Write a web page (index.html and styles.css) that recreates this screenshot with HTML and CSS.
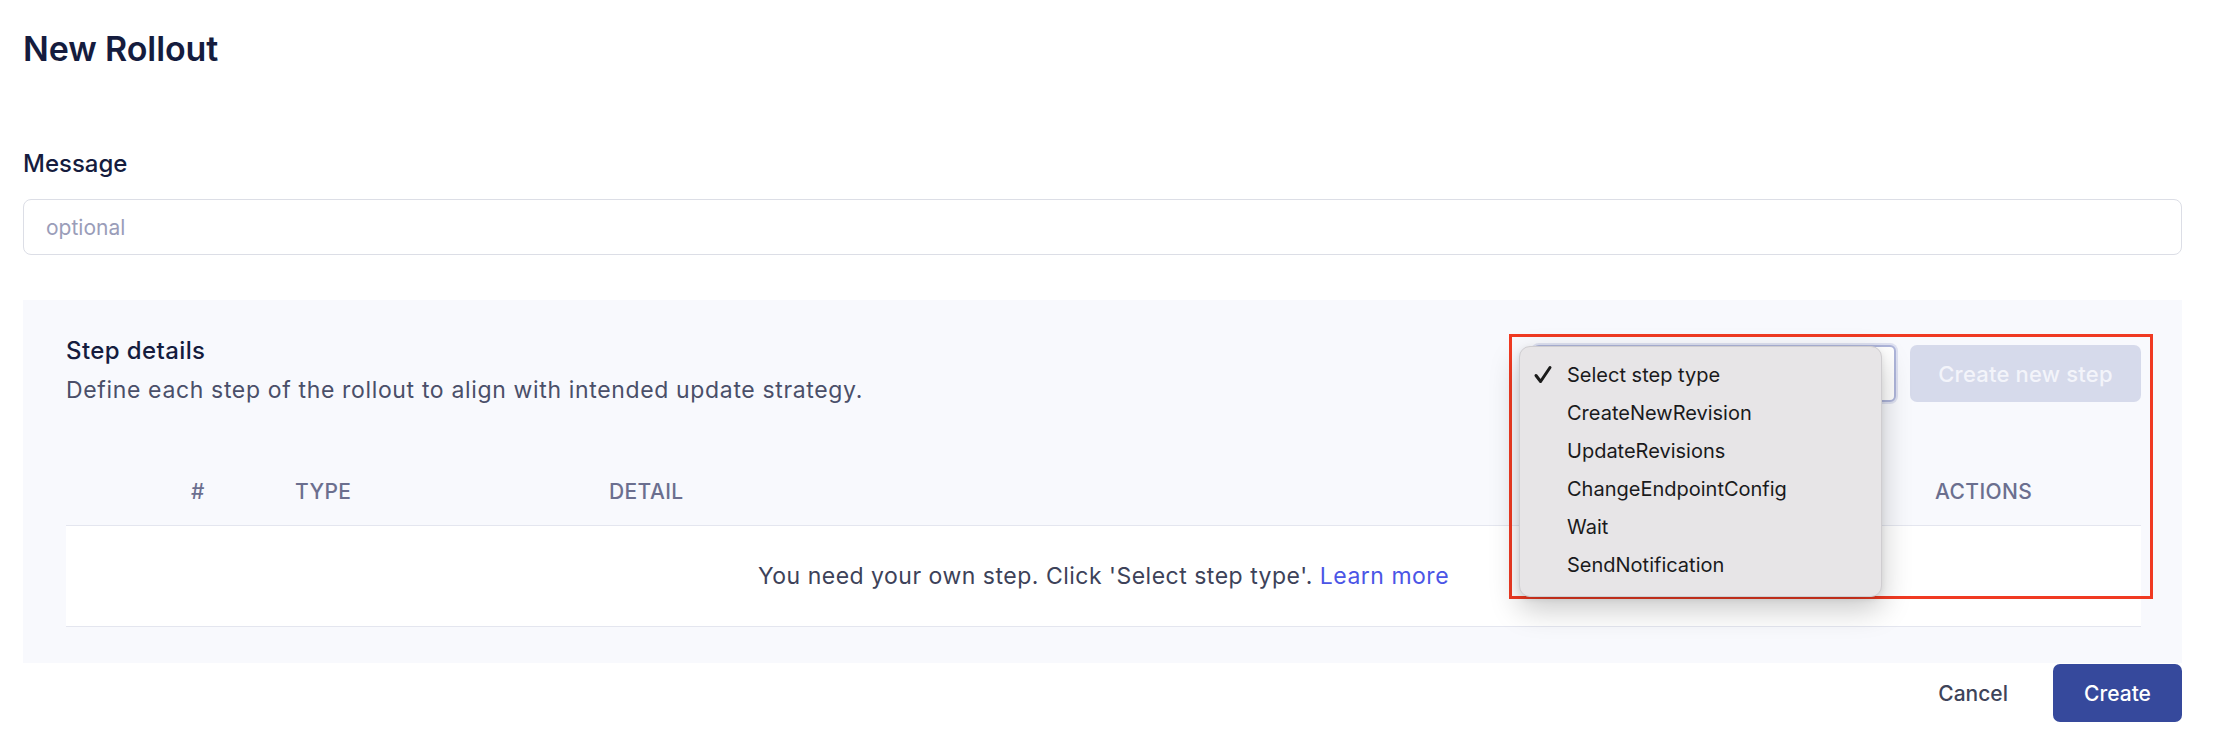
FILE: index.html
```html
<!DOCTYPE html>
<html lang="en">
<head>
<meta charset="utf-8">
<title>New Rollout</title>
<link rel="stylesheet" href="styles.css">
</head>
<body>
<div class="page">
  <h1 class="title">New Rollout</h1>

  <label class="field-label" for="msg">Message</label>
  <input id="msg" class="text-input" type="text" placeholder="optional">

  <section class="panel">
    <div class="panel-head">
      <div class="panel-text">
        <h2 class="panel-title">Step details</h2>
        <p class="panel-desc">Define each step of the rollout to align with intended update strategy.</p>
      </div>
      <div class="controls">
        <div class="select-box"></div>
        <button class="btn-disabled" type="button">Create new step</button>

        <div class="highlight"></div>
        <ul class="menu">
          <li class="menu-item checked">
            <svg class="check" viewBox="0 0 20 20" width="20" height="20"><path d="M3 10.5 L7.6 16.5 L17 2.5" fill="none" stroke="#1b1b1b" stroke-width="3" stroke-linecap="round" stroke-linejoin="round"/></svg>
            Select step type
          </li>
          <li class="menu-item">CreateNewRevision</li>
          <li class="menu-item">UpdateRevisions</li>
          <li class="menu-item">ChangeEndpointConfig</li>
          <li class="menu-item">Wait</li>
          <li class="menu-item">SendNotification</li>
        </ul>
      </div>
    </div>

    <div class="table">
      <div class="thead">
        <div class="th th-num">#</div>
        <div class="th">TYPE</div>
        <div class="th">DETAIL</div>
        <div class="th">ACTIONS</div>
      </div>
      <div class="tbody">
        <div class="empty">You need your own step. Click 'Select step type'. <a class="link" href="#">Learn more</a></div>
      </div>
    </div>
  </section>

  <div class="footer">
    <button class="btn-text" type="button">Cancel</button>
    <button class="btn-primary" type="button">Create</button>
  </div>
</div>
</body>
</html>
```

FILE: styles.css
```css
* { box-sizing: border-box; }

html, body {
  margin: 0;
  padding: 0;
  background: #ffffff;
}

body {
  font-family: Inter, "Noto Sans", "Liberation Sans", sans-serif;
  color: #151c3e;
}

.page {
  padding: 25px 42px 0 23px;
  display: flex;
  flex-direction: column;
}

.title {
  margin: 0;
  font-size: 34px;
  line-height: 48px;
  font-weight: 600;
  color: #151c3e;
  letter-spacing: -0.1px;
}

.field-label {
  margin-top: 75px;
  font-size: 24px;
  line-height: 32px;
  font-weight: 500;
  color: #151c3e;
}

.text-input {
  margin-top: 19px;
  height: 56px;
  width: 100%;
  border: 1.5px solid #dcdee6;
  border-radius: 8px;
  padding: 0 22px;
  font-family: inherit;
  font-size: 21px;
  color: #151c3e;
  background: #fff;
  outline: none;
}
.text-input::placeholder { color: #9a9db9; }

.panel {
  margin-top: 45px;
  background: #f8f9fd;
  padding: 35px 41px 36px 43px;
}

.panel-head {
  display: flex;
  justify-content: space-between;
  align-items: flex-start;
}

.panel-title {
  margin: 0;
  font-size: 24px;
  line-height: 32px;
  font-weight: 500;
  color: #151c3e;
  letter-spacing: 0.4px;
}

.panel-desc {
  margin: 7px 0 0;
  font-size: 23px;
  line-height: 32px;
  color: #4a4f69;
  letter-spacing: 0.65px;
}

.controls {
  position: relative;
  margin-top: 10px;
  display: flex;
  gap: 14px;
}

.select-box {
  width: 363px;
  height: 57px;
  border: 2px solid #aeb5da;
  border-radius: 6px;
  background: #fff;
  box-shadow: 0 0 0 2px rgba(174,181,218,0.35);
}

.btn-disabled {
  height: 57px;
  width: 231px;
  border: none;
  border-radius: 7px;
  background: #d6daeb;
  color: #f3f4fa;
  font-family: inherit;
  font-size: 22px;
  font-weight: 500;
  padding: 0;
  letter-spacing: 0.2px;
}

.highlight {
  position: absolute;
  left: -24px;
  top: -11px;
  width: 644px;
  height: 265px;
  border: 3px solid #f03a22;
  z-index: 2;
  pointer-events: none;
}

.menu {
  position: absolute;
  left: -14px;
  top: 1px;
  width: 363px;
  height: 251px;
  margin: 0;
  padding: 9px 0 0;
  list-style: none;
  background: #e7e5e7;
  border: 1px solid #cfcdd0;
  border-radius: 11px;
  box-shadow: 0 12px 30px rgba(0,0,0,0.22), 0 2px 6px rgba(0,0,0,0.08);
  z-index: 3;
}

.menu-item {
  position: relative;
  height: 38px;
  line-height: 38px;
  padding-left: 47px;
  font-size: 20px;
  color: #1a1a1c;
}

.check {
  position: absolute;
  left: 13px;
  top: 9px;
}

.table {
  margin-top: 52px;
}

.thead {
  display: grid;
  grid-template-columns: 229px 314px 1fr 206px;
  height: 68px;
  align-items: center;
  border-bottom: 1.5px solid #e4e6ef;
}

.th {
  font-size: 21px;
  font-weight: 500;
  color: #6b6f8f;
  letter-spacing: 0.4px;
}

.th-num { padding-left: 125px; }

.tbody {
  background: #ffffff;
  height: 101px;
  border-bottom: 1.5px solid #e4e6ef;
  display: flex;
  align-items: center;
  justify-content: center;
}

.empty {
  font-size: 23px;
  color: #3d4259;
  letter-spacing: 0.5px;
}

.link {
  color: #4b55e6;
  text-decoration: none;
}

.footer {
  margin-top: 1px;
  display: flex;
  justify-content: flex-end;
  gap: 15px;
}

.btn-text {
  height: 58px;
  padding: 0 30px;
  border: none;
  background: transparent;
  font-family: inherit;
  font-size: 21px;
  font-weight: 500;
  color: #3e4459;
}

.btn-primary {
  height: 58px;
  width: 129px;
  border: none;
  border-radius: 7px;
  background: #36499c;
  color: #ffffff;
  font-family: inherit;
  font-size: 21px;
  font-weight: 500;
}
```
